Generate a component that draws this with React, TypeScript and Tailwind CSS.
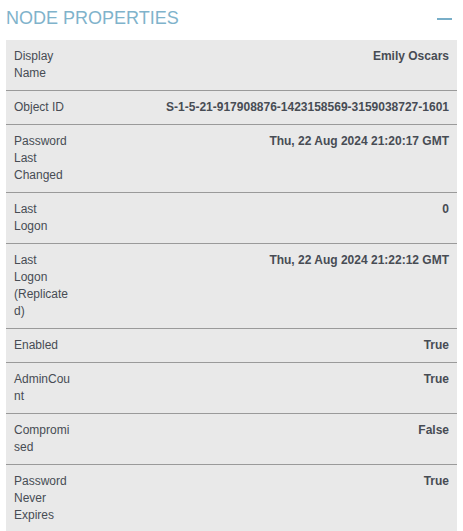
const rows: [string, string][] = [
  ["Display Name", "Emily Oscars"],
  ["Object ID", "S-1-5-21-917908876-1423158569-3159038727-1601"],
  ["Password Last Changed", "Thu, 22 Aug 2024 21:20:17 GMT"],
  ["Last Logon", "0"],
  ["Last Logon (Replicated)", "Thu, 22 Aug 2024 21:22:12 GMT"],
  ["Enabled", "True"],
  ["AdminCount", "True"],
  ["Compromised", "False"],
  ["Password Never Expires", "True"],
];

export default function App() {
  return (
    <div className="h-[531px] w-[463px] overflow-hidden bg-white font-['Liberation_Sans',Arial,sans-serif]">
      <div className="flex items-center justify-between px-[6px] pt-[6px] pb-[9px]">
        <h2 className="text-[18px] leading-[25px] font-normal uppercase text-[#7fb3cb]">
          Node Properties
        </h2>
        <span className="mr-[5px] block h-[2px] w-[15px] bg-[#78aec8]" />
      </div>
      <div className="mx-[6px] bg-[#e9e9e9]">
        {rows.map(([k, v]) => (
          <div
            key={k}
            className="flex border-b border-[#9a9a9a] px-[8px] py-[8px] text-[12px] leading-[17px] text-[#474c54]"
          >
            <div className="w-[58px] shrink-0 break-words">{k}</div>
            <div className="flex-1 text-right font-bold">{v}</div>
          </div>
        ))}
      </div>
    </div>
  );
}
